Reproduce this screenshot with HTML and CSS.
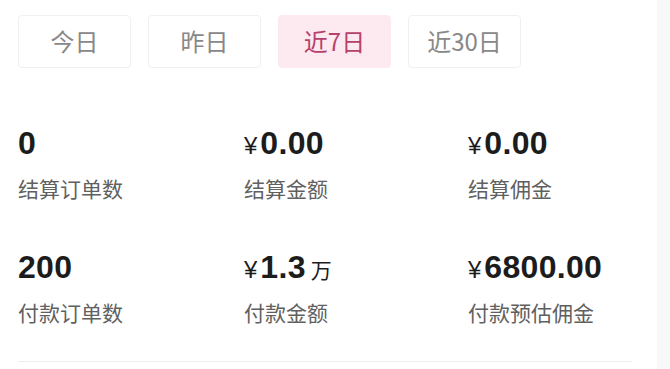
FILE: index.html
```html
<!DOCTYPE html>
<html lang="zh-CN">

<head>
    <meta charset="UTF-8">
    <title>数据概览</title>
    <link rel="stylesheet" href="styles.css">
</head>

<body>
    <div class="panel">
        <!-- 日期切换 -->
        <div class="tabs">
            <span class="tab">今日</span>
            <span class="tab">昨日</span>
            <span class="tab active">近7日</span>
            <span class="tab">近30日</span>
        </div>
        <!-- 数据 -->
        <div class="stats">
            <div class="cell">
                <div class="num">0</div>
                <div class="label">结算订单数</div>
            </div>
            <div class="cell">
                <div class="num"><span class="yen">¥</span>0.00</div>
                <div class="label">结算金额</div>
            </div>
            <div class="cell">
                <div class="num"><span class="yen">¥</span>0.00</div>
                <div class="label">结算佣金</div>
            </div>
            <div class="cell">
                <div class="num">200</div>
                <div class="label">付款订单数</div>
            </div>
            <div class="cell">
                <div class="num"><span class="yen">¥</span>1.3<span class="unit">万</span></div>
                <div class="label">付款金额</div>
            </div>
            <div class="cell">
                <div class="num"><span class="yen">¥</span>6800.00</div>
                <div class="label">付款预估佣金</div>
            </div>
        </div>
        <div class="line"></div>
    </div>
</body>

</html>
```

FILE: styles.css
```css
html,
body {
    margin: 0;
    padding: 0;
    background: #f8f8f8;
}

body {
    font-family: "Noto Sans CJK SC", sans-serif;
}

.panel {
    width: 639px;
    height: 354px;
    padding: 15px 0 0 18px;
    background: #fff;
}

.tabs {
    display: flex;
    gap: 17px;
}

.tab {
    width: 111px;
    height: 51px;
    line-height: 49px;
    border: 1px solid #f0f0f0;
    border-radius: 4px;
    text-align: center;
    font-size: 24px;
    color: #888;
}

.tab.active {
    background: #fde9f0;
    border-color: #fde9f0;
    color: #b8416c;
}

.stats {
    display: grid;
    grid-template-columns: 226px 224px 170px;
    row-gap: 46px;
    margin-top: 57px;
}

.num {
    height: 36px;
    line-height: 36px;
    font-family: "Liberation Sans", "Noto Sans CJK SC", sans-serif;
    font-size: 32px;
    font-weight: bold;
    color: #1c1c1c;
    letter-spacing: 0.3px;
}

.yen {
    font-size: 24px;
    font-weight: normal;
    margin-right: 3px;
    letter-spacing: 0;
}

.unit {
    font-family: "Noto Sans CJK SC", sans-serif;
    font-size: 21px;
    font-weight: normal;
    margin-left: 5px;
}

.label {
    margin-top: 12px;
    line-height: 30px;
    font-size: 21px;
    color: #606060;
}

.line {
    width: 614px;
    height: 1px;
    margin-top: 34px;
    background: #eee;
}
```
